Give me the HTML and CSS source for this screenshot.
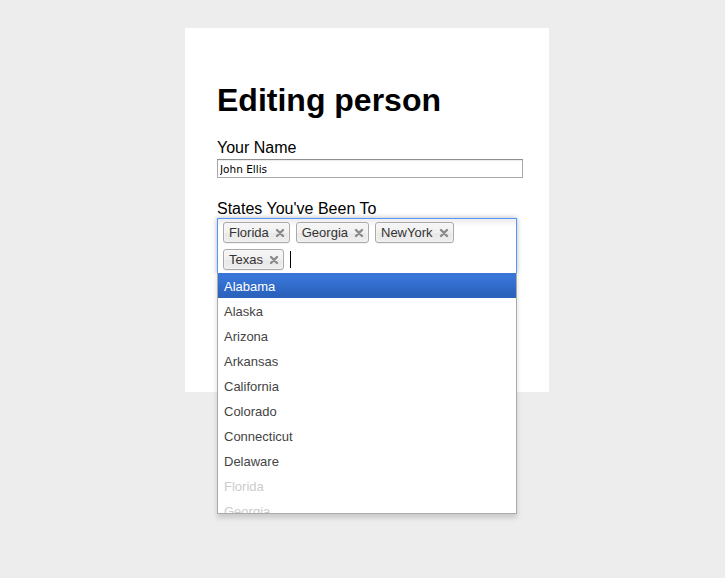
FILE: index.html
```html
<!DOCTYPE html>
<html>
<head>
<meta charset="utf-8">
<title>Editing person</title>
<link rel="stylesheet" href="styles.css">
</head>
<body>
<div class="panel">
  <h1 class="title">Editing person</h1>
  <label class="label">Your Name</label>
  <input class="text-input" type="text" value="John Ellis">
  <label class="label label-states">States You've Been To</label>
  <div class="chosen">
    <ul class="choices">
      <li class="choice">Florida<span class="close"><svg viewBox="0 0 12 12" width="12" height="12"><path d="M3 3L9 9M9 3L3 9" stroke="#8a8a8a" stroke-width="2.4" stroke-linecap="round"/></svg></span></li>
      <li class="choice">Georgia<span class="close"><svg viewBox="0 0 12 12" width="12" height="12"><path d="M3 3L9 9M9 3L3 9" stroke="#8a8a8a" stroke-width="2.4" stroke-linecap="round"/></svg></span></li>
      <li class="choice">NewYork<span class="close"><svg viewBox="0 0 12 12" width="12" height="12"><path d="M3 3L9 9M9 3L3 9" stroke="#8a8a8a" stroke-width="2.4" stroke-linecap="round"/></svg></span></li>
      <li class="choice">Texas<span class="close"><svg viewBox="0 0 12 12" width="12" height="12"><path d="M3 3L9 9M9 3L3 9" stroke="#8a8a8a" stroke-width="2.4" stroke-linecap="round"/></svg></span></li>
      <li class="search"><span class="caret"></span></li>
    </ul>
    <div class="drop">
      <ul class="results">
        <li class="result highlighted">Alabama</li>
        <li class="result">Alaska</li>
        <li class="result">Arizona</li>
        <li class="result">Arkansas</li>
        <li class="result">California</li>
        <li class="result">Colorado</li>
        <li class="result">Connecticut</li>
        <li class="result">Delaware</li>
        <li class="result selected">Florida</li>
        <li class="result selected">Georgia</li>
      </ul>
    </div>
  </div>
</div>
</body>
</html>
```

FILE: styles.css
```css
html {
  margin: 0;
  padding: 0;
  min-height: 100%;
  background: #ededed;
}

body {
  margin: 0;
  padding: 28px 0 0 0;
  min-height: 578px;
  box-sizing: border-box;
  background: #ededed;
  font-family: "Liberation Sans", Arial, Helvetica, sans-serif;
}

.panel {
  box-sizing: border-box;
  width: 364px;
  height: 364px;
  margin: 0 0 0 185px;
  padding: 54px 32px 0 32px;
  background: #fff;
}

.title {
  margin: 0 0 20px 0;
  font-size: 32px;
  line-height: 37px;
  font-weight: bold;
  color: #000;
}

.label {
  display: block;
  font-size: 16px;
  line-height: 18px;
  color: #000;
}

.text-input {
  display: block;
  box-sizing: border-box;
  width: 306px;
  height: 19px;
  margin: 2px 0 22px 0;
  padding: 0 2px;
  border: 1px solid #a9a9a9;
  border-top-color: #8f8f8f;
  box-shadow: inset 0 1px 1px rgba(0,0,0,0.08);
  font-family: "DejaVu Sans", Verdana, sans-serif;
  font-size: 10.5px;
  color: #000;
  outline: none;
}

.chosen {
  position: relative;
  width: 300px;
  font-size: 13px;
  z-index: 5;
}

.choices {
  box-sizing: border-box;
  display: flex;
  flex-wrap: wrap;
  align-items: center;
  margin: 0;
  padding: 0 5px;
  list-style: none;
  border: 1px solid #5897fb;
  background: linear-gradient(#eee 1%, #fff 15%);
  box-shadow: 0 0 5px rgba(0,0,0,0.3);
}

.choice {
  position: relative;
  margin: 3px 6px 3px 0;
  padding: 3px 20px 3px 5px;
  border: 1px solid #aaa;
  border-radius: 3px;
  background: linear-gradient(#f4f4f4 20%, #f0f0f0 50%, #e8e8e8 52%, #eee 100%);
  box-shadow: inset 0 0 2px #fff, 0 1px 0 rgba(0,0,0,0.05);
  color: #333;
  line-height: 13px;
}

.close {
  position: absolute;
  top: 4px;
  right: 3px;
  width: 12px;
  height: 12px;
}

.close svg {
  display: block;
}

.search {
  display: flex;
  align-items: center;
  height: 27px;
}

.caret {
  display: block;
  width: 1px;
  height: 17px;
  background: #000;
}

.drop {
  position: absolute;
  top: 100%;
  left: 0;
  right: 0;
  margin-top: -1px;
  background: #fff;
  border: 1px solid #aaa;
  border-top: 0;
  box-shadow: 0 4px 5px rgba(0,0,0,0.15);
  z-index: 10;
}

.results {
  margin: 0;
  padding: 0;
  list-style: none;
  max-height: 240px;
  overflow: hidden;
}

.result {
  padding: 6px 6px 4px 6px;
  line-height: 15px;
  color: #444;
}

.result.highlighted {
  background: linear-gradient(#3875d7 20%, #2a62bc 90%);
  color: #fff;
}

.result.selected {
  color: #ccc;
}
```
